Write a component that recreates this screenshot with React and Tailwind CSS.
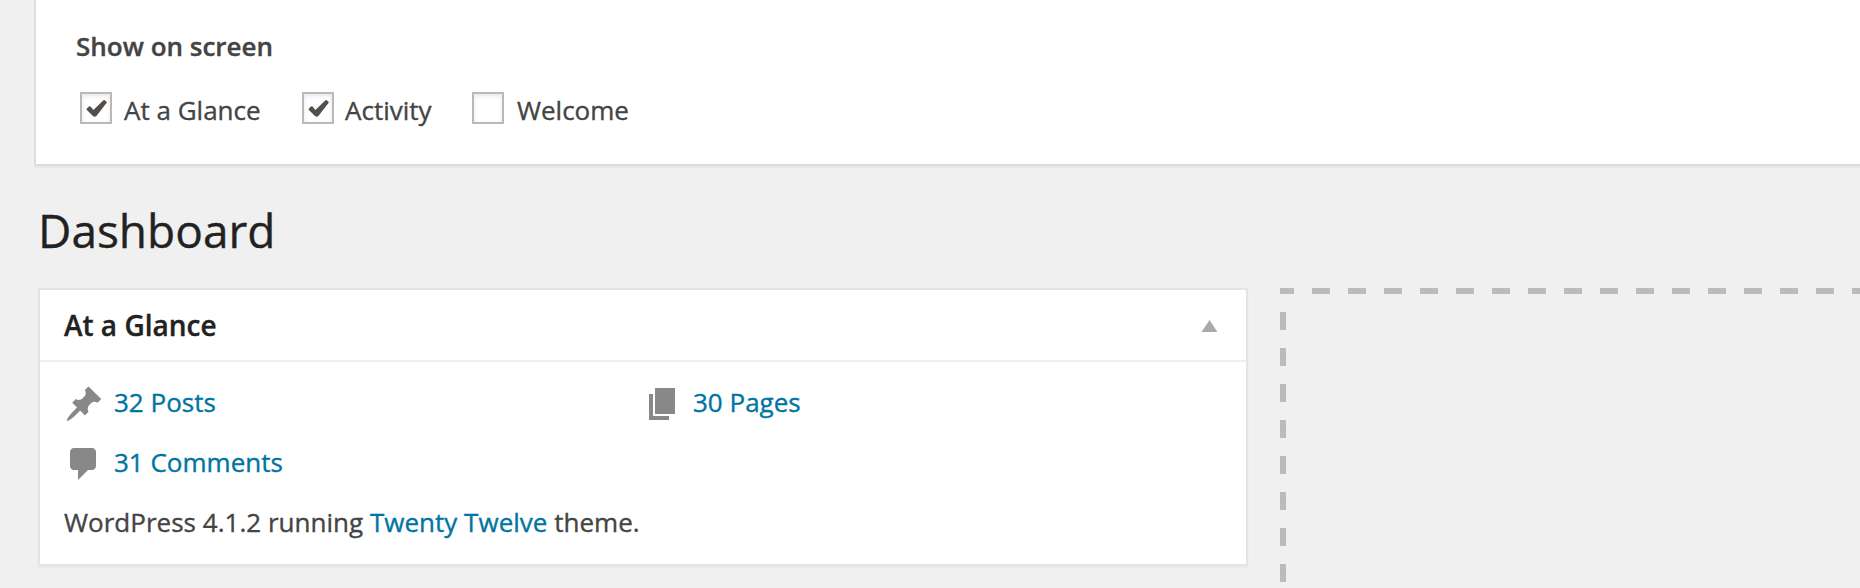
const ICONS = {
  post: 'M10.44 3.02l1.82-1.82 6.36 6.35-1.83 1.82c-1.05-.68-2.48-.57-3.41.36l-.75.75c-.92.93-1.04 2.35-.35 3.41l-1.83 1.82-2.41-2.41-2.8 2.79c-.42.42-3.38 2.71-3.8 2.29s1.86-3.39 2.28-3.81l2.79-2.79L4.1 9.36l1.83-1.82c1.05.69 2.48.57 3.4-.36l.75-.75c.93-.92 1.05-2.35.36-3.41z',
  page: 'M6 15V2h10v13H6zm-1 1h8v2H3V5h2v11z',
  comment: 'M5 2h9c1.1 0 2 .9 2 2v7c0 1.1-.9 2-2 2h-2l-5 5v-5H5c-1.1 0-2-.9-2-2V4c0-1.1.9-2 2-2z',
};

function ScreenOption({ label, checked, className, gap = 'mr-3' }) {
  return (
    <label className={`flex h-10 items-start ${className}`}>
      <span className={`mt-0.5 flex size-8 shrink-0 border-2 border-[#b9b9b9] bg-white shadow-[inset_0_2px_4px_rgba(0,0,0,0.1)] ${gap}`}>
        {checked && (
          <svg className="size-7" viewBox="0 0 28 28" fill="#544d48" aria-hidden="true">
            <path d="M4.8 14.6l2.2-2.2q.8-.6 1.6.2l2.8 3.4 9.8-9.6q1-.8 1.8.1l1.5 1.2q.5.5 0 1.2L14.4 22q-1.6 1.4-3.4 0L4.9 16q-.6-.7-.1-1.4z" />
          </svg>
        )}
      </span>
      {label}
    </label>
  );
}

function GlanceItem({ icon, label }) {
  return (
    <li className="flex h-10">
      <svg className="mt-0.5 mr-2.5 size-10 shrink-0" viewBox="0 0 20 20" fill="#888" aria-hidden="true">
        <path d={ICONS[icon]} />
      </svg>
      <a className="text-[#0074a2]">{label}</a>
    </li>
  );
}

export default function App() {
  return (
    <div className="h-[588px] overflow-hidden bg-[#f0f0f0] pl-[34px] font-['Open_Sans',sans-serif] text-[26px] leading-10 whitespace-nowrap text-[#444] [-webkit-text-stroke:0.35px_currentColor]">
      <section className="h-[166px] border-b-2 border-l-2 border-[#ddd] bg-white pt-[26px] pl-10 shadow-[0_2px_0_rgba(0,0,0,0.03)]">
        <h5 className="font-semibold">Show on screen</h5>
        <div className="mt-6 flex pl-1">
          <ScreenOption label="At a Glance" checked className="w-[222px]" />
          <ScreenOption label="Activity" checked className="w-[170px]" gap="mr-[11px]" />
          <ScreenOption label="Welcome" gap="mr-[13px]" />
        </div>
      </section>

      <h2 className="mt-[34px] pl-1 text-[46px] leading-[60px] text-[#222]">Dashboard</h2>

      <main className="mt-7 flex items-start gap-8 pl-1">
        <section className="w-[1210px] shrink-0 border-2 border-[#e4e4e4] bg-white shadow-[0_2px_2px_rgba(0,0,0,0.04)]">
          <header className="flex h-[72px] items-center justify-between border-b-2 border-[#eee] pr-[29px] pl-6">
            <h3 className="text-[28px] font-semibold text-[#222]">At a Glance</h3>
            <svg className="mt-0.5 h-3 w-4" viewBox="0 0 16 12" fill="#aaa" aria-hidden="true">
              <path d="M8.5 0l8 12h-16z" />
            </svg>
          </header>
          <div className="px-6 pt-5 pb-[22px]">
            <ul className="grid grid-cols-[579px_1fr] gap-y-5">
              <GlanceItem icon="post" label="32 Posts" />
              <GlanceItem icon="page" label="30 Pages" />
              <GlanceItem icon="comment" label="31 Comments" />
            </ul>
            <p className="mt-5 tracking-[0.02px]">
              WordPress 4.1.2 running <a className="text-[#0074a2]">Twenty Twelve</a> theme.
            </p>
          </div>
        </section>

        <div className="flex h-[300px] grow flex-col">
          <div className="flex h-1.5">
            <span className="w-3.5 bg-[#bbb]" />
            <span className="ml-[18px] grow bg-[repeating-linear-gradient(90deg,#bbb_0_18px,transparent_18px_36px)]" />
          </div>
          <div className="mt-[18px] w-1.5 grow bg-[repeating-linear-gradient(180deg,#bbb_0_18px,transparent_18px_36px)]" />
        </div>
      </main>
    </div>
  );
}
